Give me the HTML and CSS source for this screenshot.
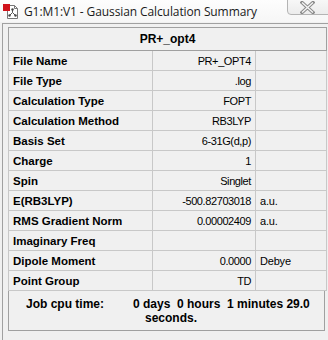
FILE: index.html
```html
<!DOCTYPE html>
<html lang="en">
<head>
  <meta charset="UTF-8">
  <title>G1:M1:V1 - Gaussian Calculation Summary</title>
  <link rel="stylesheet" href="styles.css">
</head>
<body>

  <div class="titlebar">
    <svg class="app-icon" width="16" height="16" viewBox="0 0 16 16">
      <path d="M4.5 2.5 H11.5 L14.5 5.5 V15.5 H4.5 Z" fill="#fff" stroke="#777"/>
      <path d="M11.5 2.5 V5.5 H14.5" fill="none" stroke="#777"/>
      <path d="M9.5 6.5 L9.5 9.5 L6.5 12.5 M9.5 9.5 L12.5 12.5" fill="none" stroke="#555"/>
      <circle cx="9.5" cy="6.5" r="1.2" fill="#444"/>
      <circle cx="6.5" cy="12.5" r="1.2" fill="#444"/>
      <circle cx="12.5" cy="12.5" r="1.2" fill="#444"/>
      <rect x="0" y="1" width="7" height="7" fill="#d0121b"/>
    </svg>
    <span class="title">G1:M1:V1 - Gaussian Calculation Summary</span>
    <div class="close-btn">
      <svg width="15" height="13" viewBox="0 0 15 13">
        <path d="M2 1.5 L13 11.5 M13 1.5 L2 11.5" stroke="#8a8a8a" stroke-width="3.4" stroke-linecap="square"/>
        <path d="M2 1.5 L13 11.5 M13 1.5 L2 11.5" stroke="#f4f4f4" stroke-width="1.4"/>
      </svg>
    </div>
  </div>

  <div class="frame">
    <table class="summary">
      <colgroup>
        <col class="col-label">
        <col class="col-value">
        <col class="col-unit">
      </colgroup>
      <tr><th colspan="3">PR+_opt4</th></tr>
      <tr><td class="label">File Name</td><td class="value">PR+_OPT4</td><td class="unit"></td></tr>
      <tr><td class="label">File Type</td><td class="value">.log</td><td class="unit"></td></tr>
      <tr><td class="label">Calculation Type</td><td class="value">FOPT</td><td class="unit"></td></tr>
      <tr><td class="label">Calculation Method</td><td class="value">RB3LYP</td><td class="unit"></td></tr>
      <tr><td class="label">Basis Set</td><td class="value">6-31G(d,p)</td><td class="unit"></td></tr>
      <tr><td class="label">Charge</td><td class="value">1</td><td class="unit"></td></tr>
      <tr><td class="label">Spin</td><td class="value">Singlet</td><td class="unit"></td></tr>
      <tr><td class="label">E(RB3LYP)</td><td class="value">-500.82703018</td><td class="unit">a.u.</td></tr>
      <tr><td class="label">RMS Gradient Norm</td><td class="value">0.00002409</td><td class="unit">a.u.</td></tr>
      <tr><td class="label">Imaginary Freq</td><td class="value"></td><td class="unit"></td></tr>
      <tr><td class="label">Dipole Moment</td><td class="value">0.0000</td><td class="unit">Debye</td></tr>
      <tr><td class="label">Point Group</td><td class="value">TD</td><td class="unit"></td></tr>
    </table>

    <div class="cpu-time">
      <span class="cpu-label">Job cpu time:</span>
      <div class="cpu-value">
        <div class="line1">0 days&nbsp; 0 hours&nbsp; 1 minutes 29.0</div>
        <div class="line2">seconds.</div>
      </div>
    </div>
  </div>

</body>
</html>
```

FILE: styles.css
```css
body {
  margin: 0;
  width: 328px;
  height: 340px;
  overflow: hidden;
  background: #f0f0f0;
  font-family: 'Liberation Sans', Arial, sans-serif;
  font-size: 11px;
  color: #000;
}

.titlebar {
  height: 22px;
  display: flex;
  align-items: center;
  background: linear-gradient(#fdfdfd, #f6f6f6);
  position: relative;
}

.app-icon {
  margin-left: 3px;
  margin-right: 5px;
}

.title {
  font-family: 'Open Sans', 'Noto Sans', sans-serif;
  font-size: 12px;
  color: #1a1a1a;
  letter-spacing: -0.1px;
}

.close-btn {
  position: absolute;
  right: -6px;
  top: -3px;
  width: 47px;
  height: 18px;
  border: 1px solid #b4b4b4;
  border-radius: 0 0 4px 4px;
  background: linear-gradient(#f9f9f9, #ececec);
  display: flex;
  align-items: center;
  justify-content: center;
  padding-top: 2px;
  box-sizing: border-box;
}

.close-btn svg {
  margin-left: -6px;
}

.frame {
  margin: 1px 0 0 2px;
  height: 314px;
  border: 1px solid #a0a0a0;
  border-right: none;
  padding: 3px 0 0 5px;
}

.summary {
  width: 319px;
  border-collapse: collapse;
  table-layout: fixed;
  border: 1px solid #a0a0a0;
}

.col-label {
  width: 144px;
}

.col-value {
  width: 103px;
}

.summary th {
  height: 22px;
  padding: 0;
  font-size: 12px;
  font-weight: bold;
  text-align: center;
  border: 1px solid #a0a0a0;
}

.summary td {
  height: 19px;
  padding: 0 4px;
  border: 1px solid #c8c8c8;
  white-space: nowrap;
  overflow: hidden;
}

.label {
  font-weight: bold;
  font-size: 11.5px;
}

.value {
  text-align: right;
  font-size: 11px;
  letter-spacing: -0.4px;
}

.unit {
  font-size: 11px;
  letter-spacing: -0.2px;
}

.cpu-time {
  width: 317px;
  height: 40px;
  border: 1px solid #a0a0a0;
  border-top: none;
  display: flex;
  font-weight: bold;
  font-size: 12px;
  padding-top: 6px;
  box-sizing: border-box;
}

.cpu-label {
  margin-left: 17px;
  width: 107px;
}

.cpu-value .line2 {
  margin-left: 12px;
}
```
